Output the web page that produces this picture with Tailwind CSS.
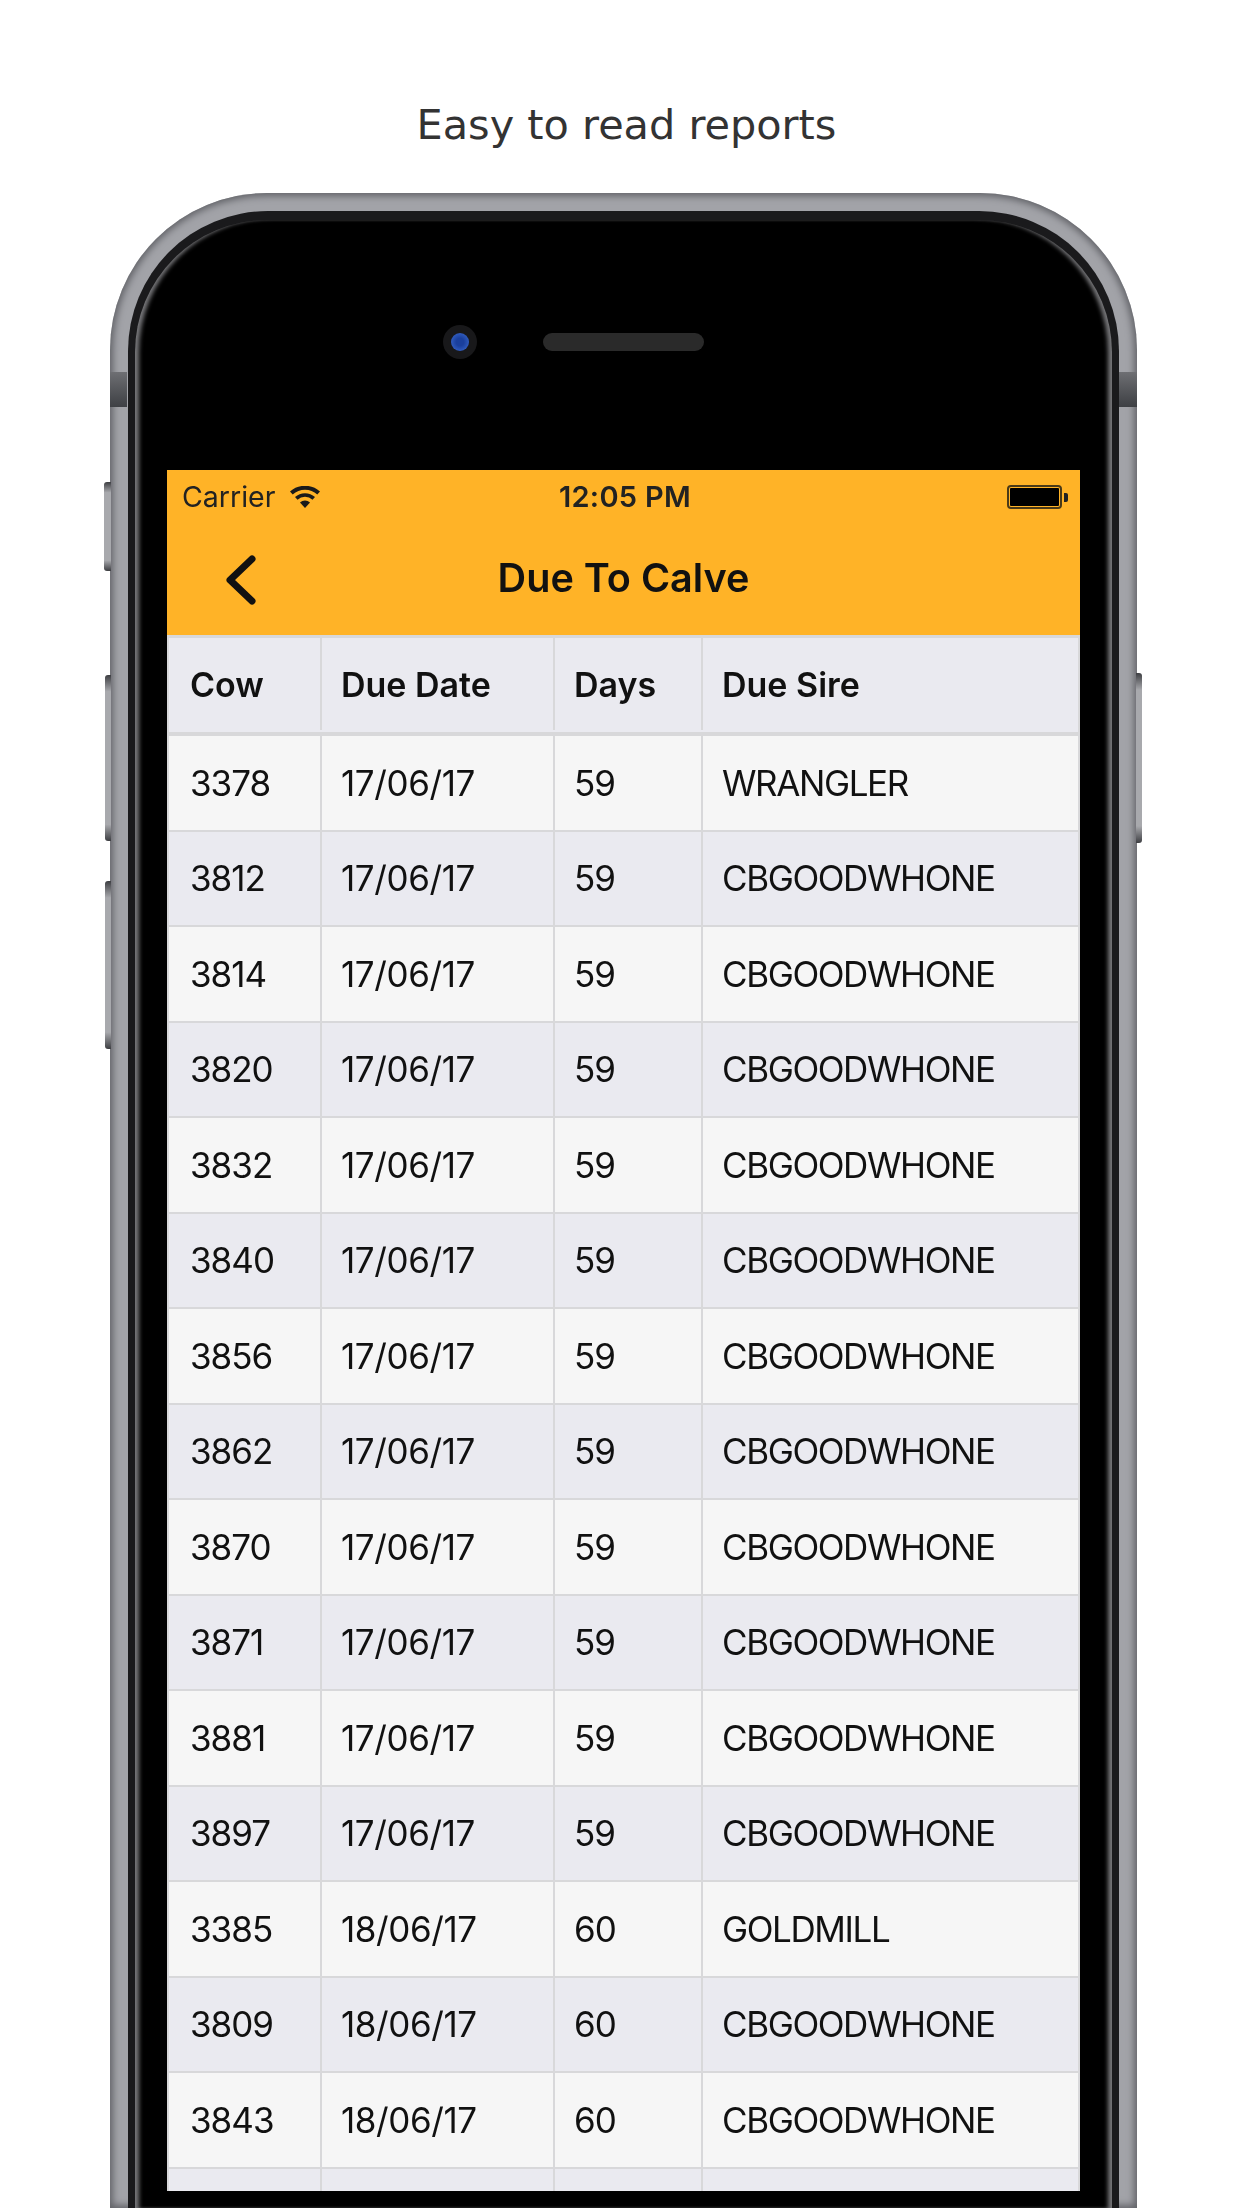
<!DOCTYPE html>
<html lang="en">
  <head>
    <meta charset="UTF-8" />
    <meta name="viewport" content="width=device-width, initial-scale=1.0" />
    <title>Easy to read reports</title>
    <script src="https://cdn.jsdelivr.net/npm/@tailwindcss/browser@4"></script>
  </head>
  <body class="bg-white">
    <div class="h-[2208px] w-[1242px] overflow-hidden font-['Inter',sans-serif]">
      <!-- Caption -->
      <div class="flex h-[193px] justify-center pt-[98px] pl-[11px]">
        <h1 class="font-['DejaVu_Sans',sans-serif] text-[41.4px] leading-[54px] font-normal text-[#333333]">Easy to read reports</h1>
      </div>

      <!-- Phone -->
      <div class="relative ml-[110px] w-[1027px]">
        <!-- Side buttons -->
        <div class="absolute top-[289px] -left-[6px] h-[89px] w-[7px] rounded-l-[3px] bg-[linear-gradient(to_bottom,#3d3e42,#a8a9ad_12%,#a8a9ad_88%,#3d3e42)]"></div>
        <div class="absolute top-[482px] -left-[5px] h-[166px] w-[6px] rounded-l-[3px] bg-[linear-gradient(to_bottom,#3d3e42,#a8a9ad_10%,#a8a9ad_90%,#3d3e42)]"></div>
        <div class="absolute top-[688px] -left-[5px] h-[168px] w-[6px] rounded-l-[3px] bg-[linear-gradient(to_bottom,#3d3e42,#a8a9ad_10%,#a8a9ad_90%,#3d3e42)]"></div>
        <div class="absolute top-[480px] -right-[5px] h-[170px] w-[6px] rounded-r-[3px] bg-[linear-gradient(to_bottom,#3d3e42,#a8a9ad_10%,#a8a9ad_90%,#3d3e42)]"></div>

        <!-- Antenna bands -->
        <div class="absolute top-[179px] left-0 z-10 h-[35px] w-[17px] bg-gradient-to-b from-[#6e6f73] to-[#3e4044]"></div>
        <div class="absolute top-[179px] right-0 z-10 h-[35px] w-[18px] bg-gradient-to-b from-[#6e6f73] to-[#3e4044]"></div>

        <div class="rounded-t-[157px] bg-[#a2a3a8] px-[18px] pt-[18px] shadow-[inset_0_0_7px_3px_#626368]">
          <div class="rounded-t-[140px] bg-[#1a1a1c] px-[7px] pt-[9px]">
            <div class="rounded-t-[132px] bg-black pr-[32px] pb-[17px] pl-[32px] shadow-[inset_6px_0_4px_-2px_#77777a,inset_-6px_0_4px_-2px_#77777a]">
              <!-- Camera and speaker -->
              <div class="flex h-[250px] items-start pt-[105px] pl-[276px]">
                <div class="flex h-[34px] w-[34px] items-center justify-center rounded-full bg-[#18181a]">
                  <div class="h-[18px] w-[18px] rounded-full bg-[radial-gradient(circle,#1a3f9c_30%,#3a68cc_90%)]"></div>
                </div>
                <div class="mt-[8px] ml-[66px] h-[18px] w-[161px] rounded-full bg-[#2a2a2a]"></div>
              </div>

              <!-- Screen -->
              <div class="h-[1721px] w-[913px] overflow-hidden text-[#111111]">
                <div class="h-[165px] bg-[#ffb327] blur-[0.5px]">
                  <div class="flex h-[54px] items-center justify-between pr-[12px] pl-[15px] text-[28.5px] text-[#222222]">
                    <div class="flex w-[200px] items-center gap-[15px]">
                      <span>Carrier</span>
                      <svg width="30" height="22" viewBox="0 0 30 22" fill="#1a1a1a">
                        <path d="M15 22 10 16.500a7.500 7.500 0 0 1 10 0Z" />
                        <path d="M7.500 13.800 5 11a15 15 0 0 1 20 0l-2.500 2.800a11 11 0 0 0-15 0Z" />
                        <path d="M2.700 8.400 0 5.500a22.500 22.500 0 0 1 30 0l-2.700 2.900a18.500 18.500 0 0 0-24.600 0Z" />
                      </svg>
                    </div>
                    <span class="text-[29px] font-semibold tracking-[0.3px]">12:05 PM</span>
                    <div class="flex w-[200px] items-center justify-end">
                      <div class="h-[24px] w-[55px] rounded-[4px] border-2 border-[#4a3a18] p-[1px]">
                        <div class="h-full rounded-[1px] bg-black"></div>
                      </div>
                      <div class="ml-[2px] h-[9px] w-[4px] rounded-r-[2px] bg-[#222222]"></div>
                    </div>
                  </div>
                  <div class="relative flex h-[111px] items-center justify-center pb-[1px]">
                    <svg class="absolute top-[31px] left-[57px]" width="32" height="50" viewBox="0 0 32 50" fill="none" stroke="#111111" stroke-width="7" stroke-linecap="round" stroke-linejoin="round">
                      <path d="M28 4 6 25l22 21" />
                    </svg>
                    <span class="text-[39.6px] font-semibold text-[#111111]">Due To Calve</span>
                  </div>
                </div>

                <!-- Report table -->
                <div class="text-[35px] tracking-[-1px] blur-[0.5px]">
                  <div class="grid h-[101px] grid-cols-[151px_233px_148px_1fr] border-t-[3px] border-b-[4px] border-x-2 border-[#d8d8da] bg-[#eaeaf0] pb-[2px] text-[34px] font-semibold tracking-normal">
                    <div class="flex items-center pl-[21px]">Cow</div>
                    <div class="flex items-center border-l-2 border-[#d8d8da] pl-[19px]">Due Date</div>
                    <div class="flex items-center border-l-2 border-[#d8d8da] pl-[19px]">Days</div>
                    <div class="flex items-center border-l-2 border-[#d8d8da] pl-[19px]">Due Sire</div>
                  </div>
                  <div class="grid h-[95.5px] grid-cols-[151px_233px_148px_1fr] border-b-2 border-x-2 border-[#d8d8da] bg-[#f6f6f6]"><div class="flex items-center pl-[21px]">3378</div><div class="flex items-center border-l-2 border-[#d8d8da] pl-[19px] tracking-[-0.4px]">17/06/17</div><div class="flex items-center border-l-2 border-[#d8d8da] pl-[19px]">59</div><div class="flex items-center border-l-2 border-[#d8d8da] pl-[19px] tracking-[-1.4px]">WRANGLER</div></div>
                  <div class="grid h-[95.5px] grid-cols-[151px_233px_148px_1fr] border-b-2 border-x-2 border-[#d8d8da] bg-[#eaeaf0]"><div class="flex items-center pl-[21px]">3812</div><div class="flex items-center border-l-2 border-[#d8d8da] pl-[19px] tracking-[-0.4px]">17/06/17</div><div class="flex items-center border-l-2 border-[#d8d8da] pl-[19px]">59</div><div class="flex items-center border-l-2 border-[#d8d8da] pl-[19px] tracking-[-1.4px]">CBGOODWHONE</div></div>
                  <div class="grid h-[95.5px] grid-cols-[151px_233px_148px_1fr] border-b-2 border-x-2 border-[#d8d8da] bg-[#f6f6f6]"><div class="flex items-center pl-[21px]">3814</div><div class="flex items-center border-l-2 border-[#d8d8da] pl-[19px] tracking-[-0.4px]">17/06/17</div><div class="flex items-center border-l-2 border-[#d8d8da] pl-[19px]">59</div><div class="flex items-center border-l-2 border-[#d8d8da] pl-[19px] tracking-[-1.4px]">CBGOODWHONE</div></div>
                  <div class="grid h-[95.5px] grid-cols-[151px_233px_148px_1fr] border-b-2 border-x-2 border-[#d8d8da] bg-[#eaeaf0]"><div class="flex items-center pl-[21px]">3820</div><div class="flex items-center border-l-2 border-[#d8d8da] pl-[19px] tracking-[-0.4px]">17/06/17</div><div class="flex items-center border-l-2 border-[#d8d8da] pl-[19px]">59</div><div class="flex items-center border-l-2 border-[#d8d8da] pl-[19px] tracking-[-1.4px]">CBGOODWHONE</div></div>
                  <div class="grid h-[95.5px] grid-cols-[151px_233px_148px_1fr] border-b-2 border-x-2 border-[#d8d8da] bg-[#f6f6f6]"><div class="flex items-center pl-[21px]">3832</div><div class="flex items-center border-l-2 border-[#d8d8da] pl-[19px] tracking-[-0.4px]">17/06/17</div><div class="flex items-center border-l-2 border-[#d8d8da] pl-[19px]">59</div><div class="flex items-center border-l-2 border-[#d8d8da] pl-[19px] tracking-[-1.4px]">CBGOODWHONE</div></div>
                  <div class="grid h-[95.5px] grid-cols-[151px_233px_148px_1fr] border-b-2 border-x-2 border-[#d8d8da] bg-[#eaeaf0]"><div class="flex items-center pl-[21px]">3840</div><div class="flex items-center border-l-2 border-[#d8d8da] pl-[19px] tracking-[-0.4px]">17/06/17</div><div class="flex items-center border-l-2 border-[#d8d8da] pl-[19px]">59</div><div class="flex items-center border-l-2 border-[#d8d8da] pl-[19px] tracking-[-1.4px]">CBGOODWHONE</div></div>
                  <div class="grid h-[95.5px] grid-cols-[151px_233px_148px_1fr] border-b-2 border-x-2 border-[#d8d8da] bg-[#f6f6f6]"><div class="flex items-center pl-[21px]">3856</div><div class="flex items-center border-l-2 border-[#d8d8da] pl-[19px] tracking-[-0.4px]">17/06/17</div><div class="flex items-center border-l-2 border-[#d8d8da] pl-[19px]">59</div><div class="flex items-center border-l-2 border-[#d8d8da] pl-[19px] tracking-[-1.4px]">CBGOODWHONE</div></div>
                  <div class="grid h-[95.5px] grid-cols-[151px_233px_148px_1fr] border-b-2 border-x-2 border-[#d8d8da] bg-[#eaeaf0]"><div class="flex items-center pl-[21px]">3862</div><div class="flex items-center border-l-2 border-[#d8d8da] pl-[19px] tracking-[-0.4px]">17/06/17</div><div class="flex items-center border-l-2 border-[#d8d8da] pl-[19px]">59</div><div class="flex items-center border-l-2 border-[#d8d8da] pl-[19px] tracking-[-1.4px]">CBGOODWHONE</div></div>
                  <div class="grid h-[95.5px] grid-cols-[151px_233px_148px_1fr] border-b-2 border-x-2 border-[#d8d8da] bg-[#f6f6f6]"><div class="flex items-center pl-[21px]">3870</div><div class="flex items-center border-l-2 border-[#d8d8da] pl-[19px] tracking-[-0.4px]">17/06/17</div><div class="flex items-center border-l-2 border-[#d8d8da] pl-[19px]">59</div><div class="flex items-center border-l-2 border-[#d8d8da] pl-[19px] tracking-[-1.4px]">CBGOODWHONE</div></div>
                  <div class="grid h-[95.5px] grid-cols-[151px_233px_148px_1fr] border-b-2 border-x-2 border-[#d8d8da] bg-[#eaeaf0]"><div class="flex items-center pl-[21px]">3871</div><div class="flex items-center border-l-2 border-[#d8d8da] pl-[19px] tracking-[-0.4px]">17/06/17</div><div class="flex items-center border-l-2 border-[#d8d8da] pl-[19px]">59</div><div class="flex items-center border-l-2 border-[#d8d8da] pl-[19px] tracking-[-1.4px]">CBGOODWHONE</div></div>
                  <div class="grid h-[95.5px] grid-cols-[151px_233px_148px_1fr] border-b-2 border-x-2 border-[#d8d8da] bg-[#f6f6f6]"><div class="flex items-center pl-[21px]">3881</div><div class="flex items-center border-l-2 border-[#d8d8da] pl-[19px] tracking-[-0.4px]">17/06/17</div><div class="flex items-center border-l-2 border-[#d8d8da] pl-[19px]">59</div><div class="flex items-center border-l-2 border-[#d8d8da] pl-[19px] tracking-[-1.4px]">CBGOODWHONE</div></div>
                  <div class="grid h-[95.5px] grid-cols-[151px_233px_148px_1fr] border-b-2 border-x-2 border-[#d8d8da] bg-[#eaeaf0]"><div class="flex items-center pl-[21px]">3897</div><div class="flex items-center border-l-2 border-[#d8d8da] pl-[19px] tracking-[-0.4px]">17/06/17</div><div class="flex items-center border-l-2 border-[#d8d8da] pl-[19px]">59</div><div class="flex items-center border-l-2 border-[#d8d8da] pl-[19px] tracking-[-1.4px]">CBGOODWHONE</div></div>
                  <div class="grid h-[95.5px] grid-cols-[151px_233px_148px_1fr] border-b-2 border-x-2 border-[#d8d8da] bg-[#f6f6f6]"><div class="flex items-center pl-[21px]">3385</div><div class="flex items-center border-l-2 border-[#d8d8da] pl-[19px] tracking-[-0.4px]">18/06/17</div><div class="flex items-center border-l-2 border-[#d8d8da] pl-[19px]">60</div><div class="flex items-center border-l-2 border-[#d8d8da] pl-[19px] tracking-[-1.4px]">GOLDMILL</div></div>
                  <div class="grid h-[95.5px] grid-cols-[151px_233px_148px_1fr] border-b-2 border-x-2 border-[#d8d8da] bg-[#eaeaf0]"><div class="flex items-center pl-[21px]">3809</div><div class="flex items-center border-l-2 border-[#d8d8da] pl-[19px] tracking-[-0.4px]">18/06/17</div><div class="flex items-center border-l-2 border-[#d8d8da] pl-[19px]">60</div><div class="flex items-center border-l-2 border-[#d8d8da] pl-[19px] tracking-[-1.4px]">CBGOODWHONE</div></div>
                  <div class="grid h-[95.5px] grid-cols-[151px_233px_148px_1fr] border-b-2 border-x-2 border-[#d8d8da] bg-[#f6f6f6]"><div class="flex items-center pl-[21px]">3843</div><div class="flex items-center border-l-2 border-[#d8d8da] pl-[19px] tracking-[-0.4px]">18/06/17</div><div class="flex items-center border-l-2 border-[#d8d8da] pl-[19px]">60</div><div class="flex items-center border-l-2 border-[#d8d8da] pl-[19px] tracking-[-1.4px]">CBGOODWHONE</div></div>
                  <div class="grid h-[95.5px] grid-cols-[151px_233px_148px_1fr] border-x-2 border-[#d8d8da] bg-[#eaeaf0]"><div></div><div class="border-l-2 border-[#d8d8da]"></div><div class="border-l-2 border-[#d8d8da]"></div><div class="border-l-2 border-[#d8d8da]"></div></div>
                </div>
              </div>
            </div>
          </div>
        </div>
      </div>
    </div>
  </body>
</html>
